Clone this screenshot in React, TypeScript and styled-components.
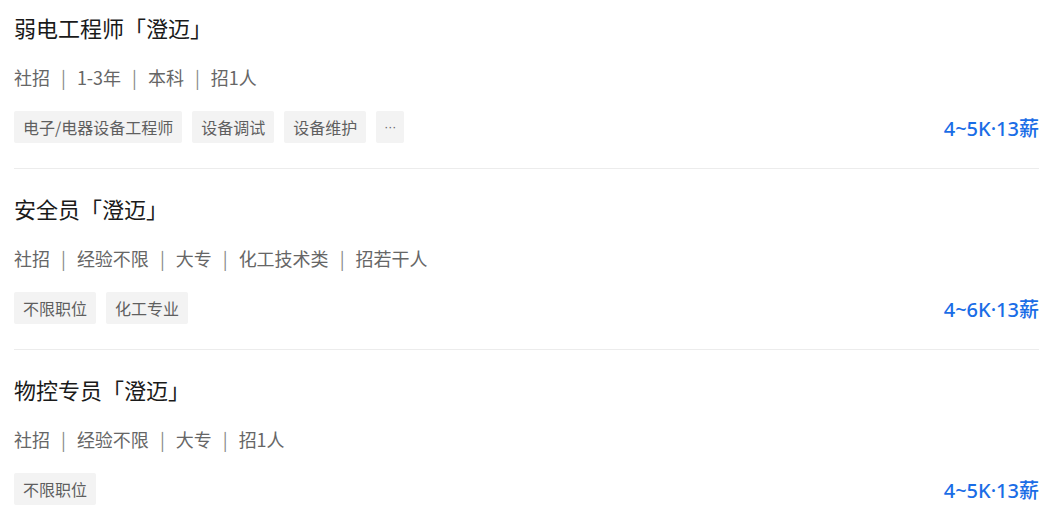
import React from 'react'
import styled, { createGlobalStyle } from 'styled-components'

const GlobalStyle = createGlobalStyle`
  html, body {
    margin: 0;
    padding: 0;
    background: #fff;
  }
  body {
    font-family: "Noto Sans CJK SC", "Noto Sans", sans-serif;
  }
`

interface Job {
  title: string
  city: string
  meta: string[]
  tags: string[]
  more?: boolean
  salary: string
}

const jobs: Job[] = [
  {
    title: '弱电工程师',
    city: '澄迈',
    meta: ['社招', '1-3年', '本科', '招1人'],
    tags: ['电子/电器设备工程师', '设备调试', '设备维护'],
    more: true,
    salary: '4~5K·13薪'
  },
  {
    title: '安全员',
    city: '澄迈',
    meta: ['社招', '经验不限', '大专', '化工技术类', '招若干人'],
    tags: ['不限职位', '化工专业'],
    salary: '4~6K·13薪'
  },
  {
    title: '物控专员',
    city: '澄迈',
    meta: ['社招', '经验不限', '大专', '招1人'],
    tags: ['不限职位'],
    salary: '4~5K·13薪'
  }
]

const List = styled.div`
  display: flex;
  flex-direction: column;
  padding: 0 7px 0 14px;
`

const Item = styled.div`
  display: flex;
  flex-direction: column;
  padding: 25px 0 25px;
  border-bottom: 1px solid #ececec;

  &:first-child {
    padding-top: 13px;
  }
`

const Title = styled.div`
  font-size: 22px;
  line-height: 28px;
  color: #1a1a1a;
`

const Meta = styled.div`
  display: flex;
  align-items: center;
  margin-top: 24px;
  font-size: 18px;
  line-height: 24px;
  color: #666;
`

const Sep = styled.span`
  margin: 0 11px;
  color: #8a8a8a;
`

const Bottom = styled.div`
  display: flex;
  align-items: center;
  justify-content: space-between;
  margin-top: 22px;
`

const Tags = styled.div`
  display: flex;
  gap: 10px;
`

const Tag = styled.span<{ $more?: boolean }>`
  display: inline-flex;
  align-items: center;
  height: 32px;
  padding: 0 ${p => (p.$more ? 8 : 9)}px;
  border-radius: 2px;
  background: #f3f3f3;
  color: #5f5f5f;
  font-size: ${p => (p.$more ? 12 : 16)}px;
  font-family: ${p => (p.$more ? '"Liberation Sans", sans-serif' : 'inherit')};
`

const Salary = styled.span`
  font-family: "Noto Sans", "Noto Sans CJK SC", sans-serif;
  font-size: 20px;
  font-weight: 500;
  color: #1a6de6;
`

export default function App() {
  return (
    <>
      <GlobalStyle />
      <List>
        {jobs.map((job, i) => (
          <Item key={i}>
            <Title>{job.title}「{job.city}」</Title>
            <Meta>
              {job.meta.map((m, j) => (
                <React.Fragment key={j}>
                  {j > 0 && <Sep>|</Sep>}
                  <span>{m}</span>
                </React.Fragment>
              ))}
            </Meta>
            <Bottom>
              <Tags>
                {job.tags.map(t => <Tag key={t}>{t}</Tag>)}
                {job.more && <Tag $more>···</Tag>}
              </Tags>
              <Salary>{job.salary}</Salary>
            </Bottom>
          </Item>
        ))}
      </List>
    </>
  )
}
